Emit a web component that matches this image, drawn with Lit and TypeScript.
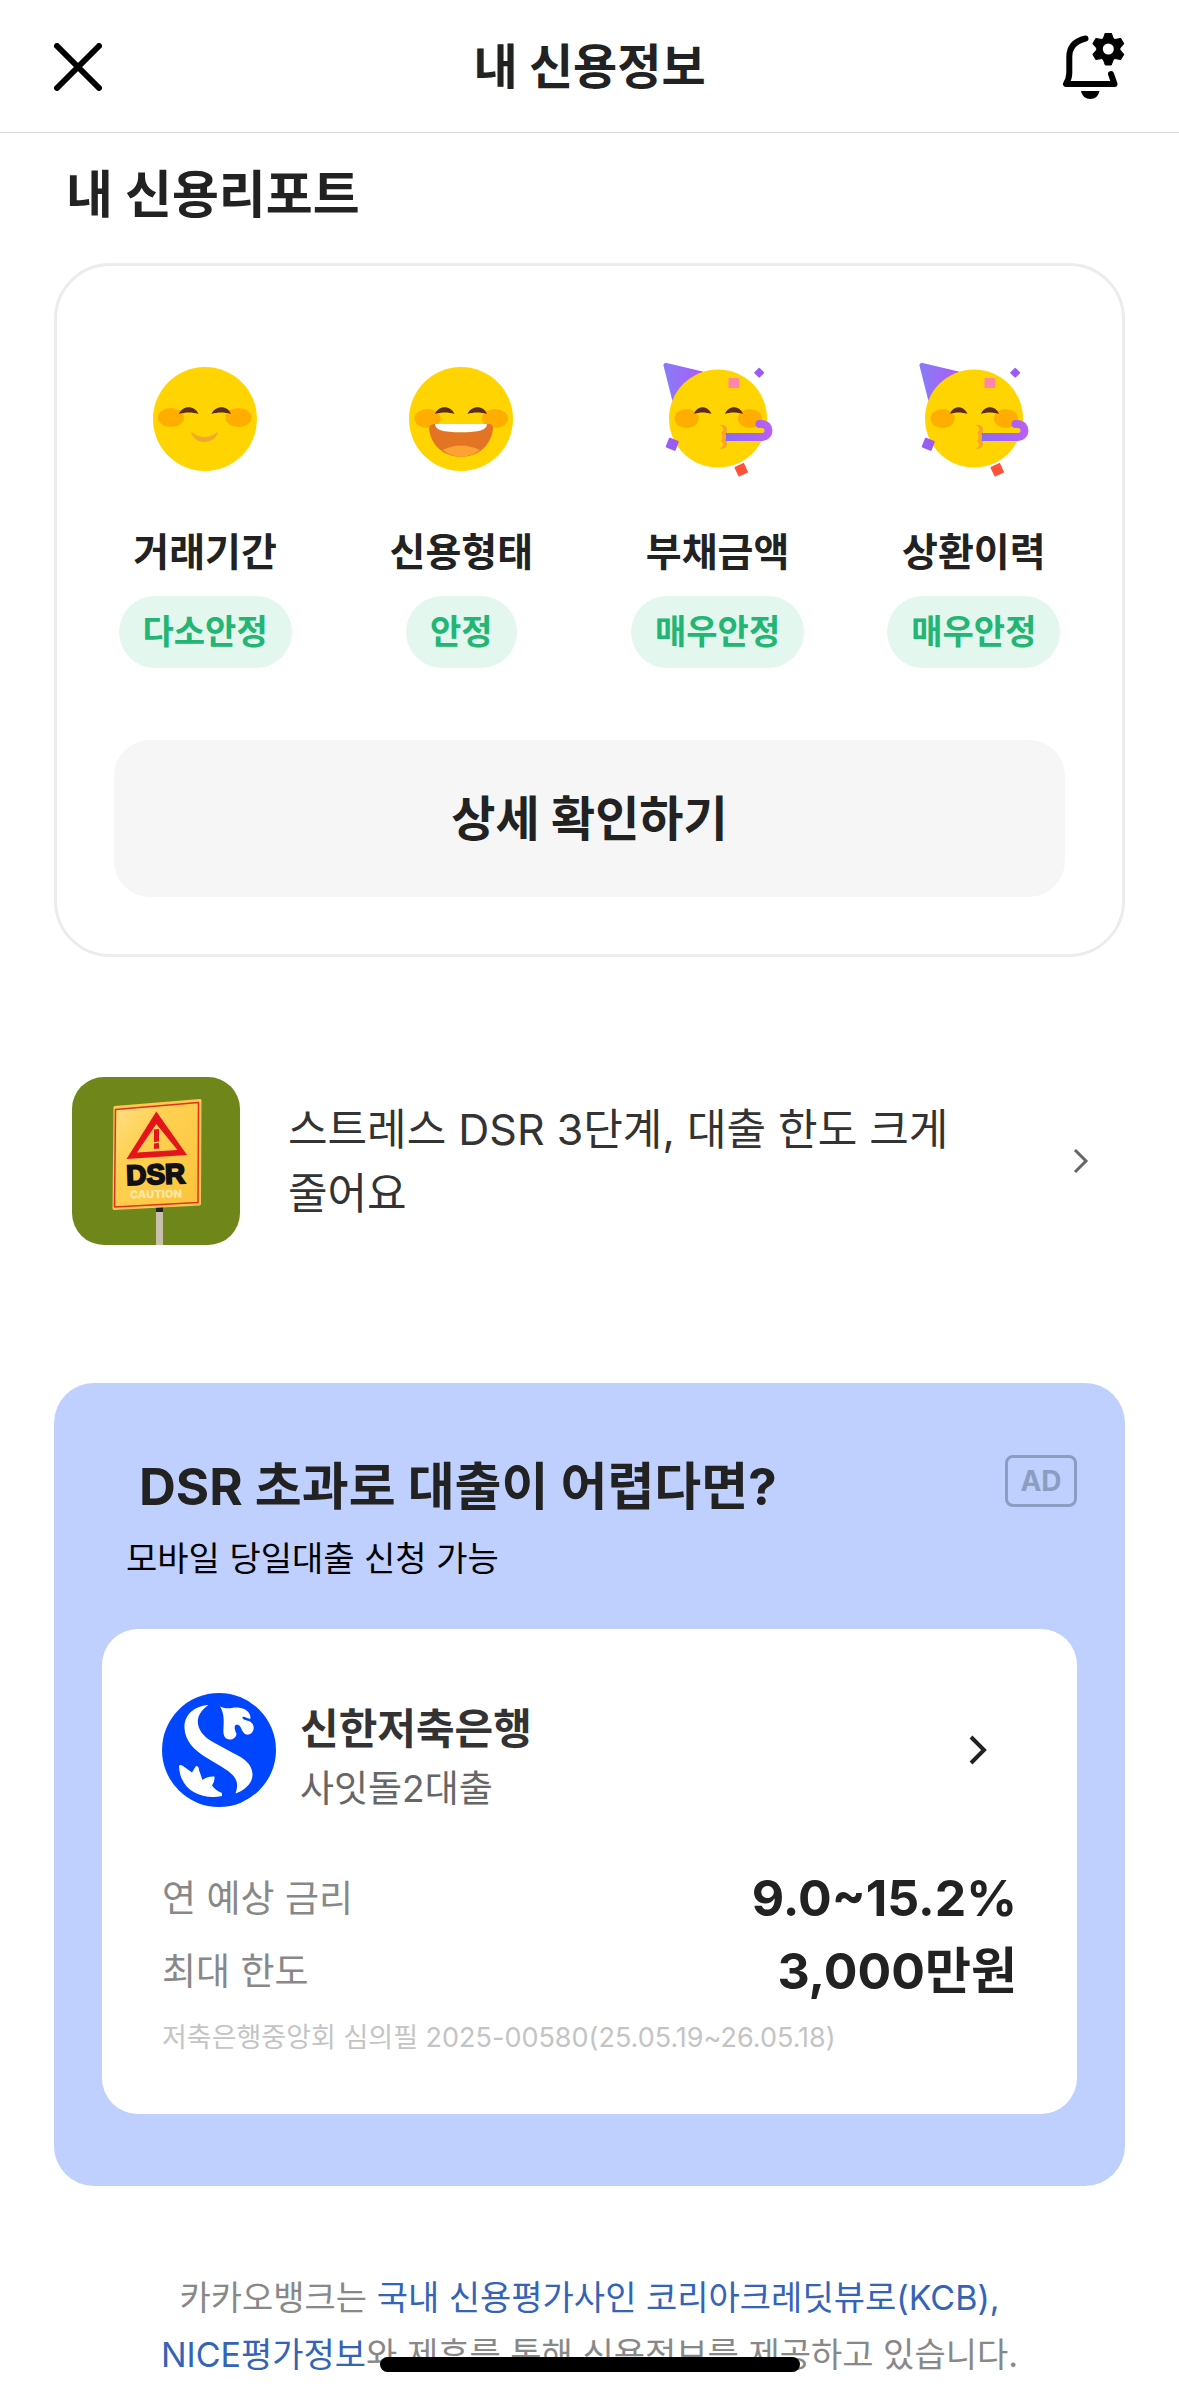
import { html, svg, css, LitElement } from "lit";
import { customElement, property } from "lit/decorators.js";

const eyes = svg`
  <path fill="#5a2d1c" d="M34 55C37 46 50 46 53.5 55C48 53 40 53 34 55Z"/>
  <path fill="#5a2d1c" d="M66.5 55C70 46 83 46 86 55C80 53 72 53 66.5 55Z"/>`;

const faces = {
  smile: svg`
    <circle cx="60" cy="60" r="52" fill="#ffd400"/>
    <ellipse cx="26" cy="58.5" rx="13" ry="9.5" fill="#ffae00"/>
    <ellipse cx="93.5" cy="58.5" rx="13" ry="9.5" fill="#ffae00"/>
    ${eyes}
    <path fill="#f0a830" d="M46 72.5C54 80 65 80 73 72.5C70 86.5 49 86.5 46 72.5Z"/>`,
  laugh: svg`
    <circle cx="60" cy="60" r="52" fill="#ffd400"/>
    <ellipse cx="26.5" cy="59.5" rx="13" ry="9.5" fill="#ffae00"/>
    <ellipse cx="94" cy="59.5" rx="13" ry="9.5" fill="#ffae00"/>
    ${eyes}
    <path fill="#e27423" d="M34 65H88Q92 65 92 70C90 86 78 97.7 60 97.7S30 86 28 70Q28 65 34 65Z"/>
    <path fill="#ffa133" d="M41.5 91Q60 82 79 91Q70 97.7 60 97.7T41.5 91Z"/>
    <path fill="#fff" d="M34 65H86C86 71 78 73.3 60 73.3S34 71 34 65Z"/>`,
  party: svg`
    <defs>
      <linearGradient id="hat"><stop offset="0" stop-color="#8a7bf5"/><stop offset="1" stop-color="#a95cfb"/></linearGradient>
      <linearGradient id="horn" gradientUnits="userSpaceOnUse" x1="68" y1="0" x2="112" y2="0"><stop offset="0" stop-color="#8b6af0"/><stop offset="1" stop-color="#b75ffa"/></linearGradient>
    </defs>
    <path fill="url(#hat)" stroke="url(#hat)" stroke-width="5" stroke-linejoin="round" d="M8 6.5L44 15L17 42Z"/>
    <circle cx="60" cy="59.5" r="49" fill="#ffd400"/>
    <ellipse cx="28.5" cy="59.5" rx="12" ry="9.5" fill="#ffae00"/>
    <ellipse cx="92" cy="59.5" rx="12" ry="9.5" fill="#ffae00"/>
    <path fill="#5a2d1c" d="M36 55C39 46 50 46 53.5 55C48 53 41 53 36 55Z"/>
    <path fill="#5a2d1c" d="M67 55C70 46 82 46 85 55C79 53 72 53 67 55Z"/>
    <path fill="#f9a52b" d="M62 66C68 65 71 70 68 75Q66 78 68 81C71 86 67 91 62 89.5C66 87 66 84 63 82Q66 78 63 74C66 72 66 69 62 66Z"/>
    <path fill="none" stroke="url(#horn)" stroke-width="8" d="M67.7 78H104.5"/>
    <path fill="none" stroke="url(#horn)" stroke-width="8" stroke-linecap="round" d="M104 78a6.5 6.5 0 0 0 0-13H101.5"/>
    <rect x="70.5" y="19" width="10.5" height="10" rx="1" fill="#ff86a8"/>
    <rect x="97.5" y="10" width="7.5" height="7.5" rx="1" fill="#9b5cf6" transform="rotate(45 101.2 13.7)"/>
    <rect x="9" y="80" width="10.5" height="10.5" rx="1" fill="#9b5cf6" transform="rotate(22 14.3 85.3)"/>
    <rect x="78" y="105.5" width="10.5" height="10.5" rx="1" fill="#ff5236" transform="rotate(-25 83.3 110.7)"/>`,
};

const closeIcon = html`
  <svg width="48" height="48" viewBox="0 0 48 48" fill="none" stroke="#000" stroke-width="6" stroke-linecap="round">
    <path d="M3 3L45 45M45 3L3 45"/>
  </svg>`;

const bellIcon = html`
  <svg width="64" height="68" viewBox="0 0 64 68">
    <path fill="none" stroke="#000" stroke-width="6" stroke-linecap="round" stroke-linejoin="round" d="M24.5 5.5C14 8 8.3 14 8.3 24V40Q8.3 45 5 51H53.5L50 41"/>
    <path d="M20 58H38.5C37.5 63 34 66 29.3 66S21 63 20 58Z"/>
    <g transform="translate(47.3 16)">
      <circle r="12"/>
      <path d="M-3 -16H3L5.5 -9H-5.5ZM-3 16H3L5.5 9H-5.5Z" stroke="#000" stroke-linejoin="round"/>
      <path d="M-3 -16H3L5.5 -9H-5.5ZM-3 16H3L5.5 9H-5.5Z" stroke="#000" stroke-linejoin="round" transform="rotate(60)"/>
      <path d="M-3 -16H3L5.5 -9H-5.5ZM-3 16H3L5.5 9H-5.5Z" stroke="#000" stroke-linejoin="round" transform="rotate(120)"/>
      <circle r="5.5" fill="#fff"/>
    </g>
  </svg>`;

const signImage = html`
  <svg class="thumb" viewBox="0 0 168 168" aria-hidden="true">
    <defs>
      <linearGradient id="plate" x1="0" y1="0" x2="1" y2="1"><stop offset="0" stop-color="#ffdf8a"/><stop offset=".35" stop-color="#ffd152"/><stop offset="1" stop-color="#fcc23a"/></linearGradient>
    </defs>
    <rect width="168" height="168" fill="#6f861b"/>
    <rect x="84" y="130" width="7" height="38" fill="#c8bfad"/>
    <rect x="84" y="130" width="7" height="5" fill="#222"/>
    <path fill="url(#plate)" stroke="#ffc94f" stroke-width="3" stroke-linejoin="round" d="M43 30.5L128 23.5L127.5 127L42 131.5Z"/>
    <path fill="none" stroke="#e0311f" stroke-width="1.5" stroke-linejoin="round" d="M43.5 32.5L126.5 25.5L126 125.5L42.5 130Z"/>
    <path fill="#e3141b" fill-rule="evenodd" d="M84.3 34.5L115 78L54.5 82ZM84.3 47L65 75.5L105.5 73Z"/>
    <path fill="#e3141b" d="M82 52.5L87 52V64.5L82 65ZM82 66.5L87 66V71.5L82 72Z"/>
    <text class="sign-word" x="84" y="107" text-anchor="middle" transform="rotate(-2 84 107)">DSR</text>
    <text class="sign-note" x="84" y="121" text-anchor="middle" transform="rotate(-1 84 121)">CAUTION</text>
  </svg>`;

const bankLogo = html`
  <svg class="logo" viewBox="0 0 114 114" aria-hidden="true">
    <circle cx="57" cy="57" r="57" fill="#0046ff"/>
    <g fill="#fff">
      <path d="M46.5 12C31 13 22 23 22.5 35C23 48 32 57 45 65L60 74C73 82 78 88 73.5 100.5C84 97 91 89 90.5 81C90 71 82 65 71 60L50 48.5C35 40 29 24 46.5 12Z"/>
      <path d="M58 13.5C65 17 70 14 76 14.5C84 15 89 20 88.5 25.5C86 26.5 83 23 80.5 24C80 27 84 27 87 28C92 30 93 36 90 39.5C88 42 84 42.5 82 40C79 37 79 32 75 31.5C71 32 73 37 74.5 41C74 45 70 47 67 46.5C62 46 61 41 61.5 35C62 27 62 20 58 13.5Z"/>
      <path d="M17 73Q18 71 21 73L30 79.5Q32 76 34 73Q37 73 37 77L40.5 87Q45 83 52.5 83.5Q53 88 50 92.5Q54 98 60 100V103C40 107 18 98 17 73Z"/>
    </g>
  </svg>`;

@customElement("status-item")
export class StatusItem extends LitElement {
  static styles = css`
    :host {
      display: flex;
      flex-direction: column;
      align-items: center;
    }
    .face {
      display: block;
      width: 120px;
      height: 120px;
    }
    .label {
      margin-top: 49px;
      font-size: 39px;
      font-weight: 700;
      line-height: 48px;
    }
    .pill {
      margin-top: 20px;
      padding: 0 24px;
      border-radius: 36px;
      background: #e3f7ee;
      color: #22b573;
      font-size: 34px;
      font-weight: 700;
      line-height: 72px;
    }
  `;

  @property() face = "smile";
  @property() label = "";
  @property() status = "";

  render() {
    return html`
      <svg class="face" viewBox="0 0 120 120" aria-hidden="true">${faces[this.face]}</svg>
      <span class="label">${this.label}</span>
      <span class="pill">${this.status}</span>`;
  }
}

@customElement("app-root")
export class AppRoot extends LitElement {
  static styles = css`
    :host {
      display: block;
      background: #fff;
      color: #222;
      font-family: Inter, "Noto Sans CJK KR", sans-serif;
      word-break: keep-all;
    }
    h1, h2, h3, p, dl, dd {
      margin: 0;
    }
    a {
      color: inherit;
      text-decoration: none;
    }
    button {
      padding: 0;
      border: 0;
      background: none;
      color: inherit;
      font-family: inherit;
      cursor: pointer;
    }
    svg {
      display: block;
      flex: none;
    }
    .topbar {
      display: flex;
      align-items: center;
      justify-content: space-between;
      height: 130px;
      padding: 2px 54px 0;
      border-bottom: 1px solid #d9d9d9;
    }
    .topbar h1 {
      font-size: 48px;
      line-height: 64px;
    }
    .icon-slot {
      display: flex;
      width: 64px;
    }
    main {
      padding: 26px 54px 0;
    }
    .section-title {
      padding-left: 12px;
      font-size: 51px;
      line-height: 72px;
    }
    .report {
      margin-top: 32px;
      padding: 93px 20px 57px;
      border: 3px solid #ececec;
      border-radius: 56px;
    }
    .statuses {
      display: grid;
      grid-template-columns: repeat(4, 1fr);
    }
    .detail {
      display: block;
      width: calc(100% - 74px);
      margin: 72px auto 0;
      border-radius: 36px;
      background: #f6f6f6;
      font-size: 48px;
      font-weight: 700;
      line-height: 157px;
    }
    .news {
      display: flex;
      align-items: center;
      margin-top: 120px;
      padding: 0 36px 0 18px;
      color: #333;
    }
    .thumb {
      width: 168px;
      height: 168px;
      border-radius: 32px;
    }
    .sign-word {
      font-family: "Liberation Sans", sans-serif;
      font-size: 28px;
      font-weight: 700;
      fill: #111;
      stroke: #111;
      stroke-width: 2px;
    }
    .sign-note {
      font-size: 11px;
      font-weight: 900;
      fill: #fbe7a0;
    }
    .news p {
      flex: 1;
      padding: 0 90px 0 48px;
      font-size: 43px;
      line-height: 64px;
    }
    .ad {
      margin-top: 138px;
      padding: 72px 48px;
      border-radius: 40px;
      background: #bfd0ff;
    }
    .ad-head {
      display: flex;
      align-items: flex-start;
      justify-content: space-between;
      padding-left: 37px;
    }
    .ad-head h2 {
      font-size: 51px;
      line-height: 64px;
    }
    .badge {
      box-sizing: border-box;
      width: 72px;
      border: 3px solid #8c9dc2;
      border-radius: 8px;
      color: #8c9dc2;
      font-size: 28px;
      font-weight: 700;
      line-height: 46px;
      text-align: center;
    }
    .ad-sub {
      margin-top: 16px;
      padding-left: 24px;
      color: #000;
      font-size: 34px;
      line-height: 48px;
    }
    .offer {
      display: block;
      margin-top: 46px;
      padding: 64px 60px 56px;
      border-radius: 36px;
      background: #fff;
    }
    .bank {
      display: flex;
      align-items: flex-start;
      gap: 24px;
      padding-right: 30px;
    }
    .logo {
      width: 114px;
      height: 114px;
    }
    .bank-text {
      flex: 1;
      padding-top: 6px;
    }
    .bank-text h3 {
      color: #333;
      font-size: 42px;
      line-height: 60px;
    }
    .bank-text p {
      color: #666;
      font-size: 37px;
      line-height: 60px;
    }
    .go {
      width: 18px;
      height: 114px;
    }
    .terms {
      margin-top: 43px;
    }
    .term {
      display: flex;
      align-items: center;
      justify-content: space-between;
      line-height: 73px;
    }
    .term dt {
      color: #888;
      font-size: 37px;
    }
    .term dd {
      font-size: 50px;
      font-weight: 700;
    }
    .review {
      margin-top: 10px;
      color: #c4c4c4;
      font-size: 27px;
      line-height: 40px;
    }
    .notice {
      padding: 83px 12px 13px;
      color: #888;
      font-size: 34px;
      line-height: 57px;
      text-align: center;
    }
    .notice a {
      color: #3464b8;
    }
    .home-bar {
      position: fixed;
      bottom: 24px;
      left: 50%;
      width: 420px;
      height: 15px;
      margin-left: -210px;
      border-radius: 8px;
      background: #000;
    }
  `;

  statuses = [
    { face: "smile", label: "거래기간", status: "다소안정" },
    { face: "laugh", label: "신용형태", status: "안정" },
    { face: "party", label: "부채금액", status: "매우안정" },
    { face: "party", label: "상환이력", status: "매우안정" },
  ];

  terms = [
    ["연 예상 금리", "9.0~15.2%"],
    ["최대 한도", "3,000만원"],
  ];

  render() {
    return html`
    <header class="topbar">
      <button class="icon-slot" aria-label="닫기">${closeIcon}</button>
      <h1>내 신용정보</h1>
      <button class="icon-slot" aria-label="알림 설정">${bellIcon}</button>
    </header>
    <main>
      <h2 class="section-title">내 신용리포트</h2>
      <section class="report">
        <div class="statuses">
          ${this.statuses.map(
            (s) => html`<status-item face=${s.face} label=${s.label} status=${s.status}></status-item>`
          )}
        </div>
        <button class="detail">상세 확인하기</button>
      </section>

      <a class="news" href="#dsr">
        ${signImage}
        <p>스트레스 DSR 3단계, 대출 한도 크게 줄어요</p>
        <svg width="16" height="26" viewBox="0 0 16 26" fill="none" stroke="#666" stroke-width="3">
          <path d="M2 2L13 13L2 24"/>
        </svg>
      </a>

      <section class="ad">
        <div class="ad-head">
          <h2>DSR 초과로 대출이 어렵다면?</h2>
          <span class="badge">AD</span>
        </div>
        <p class="ad-sub">모바일 당일대출 신청 가능</p>
        <a class="offer" href="#offer">
          <div class="bank">
            ${bankLogo}
            <div class="bank-text">
              <h3>신한저축은행</h3>
              <p>사잇돌2대출</p>
            </div>
            <svg class="go" viewBox="0 0 18 30" fill="none" stroke="#222" stroke-width="4">
              <path d="M2 2L15 15L2 28"/>
            </svg>
          </div>
          <dl class="terms">
            ${this.terms.map(
              ([name, value]) => html`<div class="term"><dt>${name}</dt><dd>${value}</dd></div>`
            )}
          </dl>
          <p class="review">저축은행중앙회 심의필 2025-00580(25.05.19~26.05.18)</p>
        </a>
      </section>

      <p class="notice">
        카카오뱅크는 <a href="#kcb">국내 신용평가사인 코리아크레딧뷰로(KCB),</a>
        <a href="#nice">NICE평가정보</a>와 제휴를 통해 신용정보를 제공하고 있습니다.
      </p>
    </main>
    <div class="home-bar"></div>`;
  }
}
